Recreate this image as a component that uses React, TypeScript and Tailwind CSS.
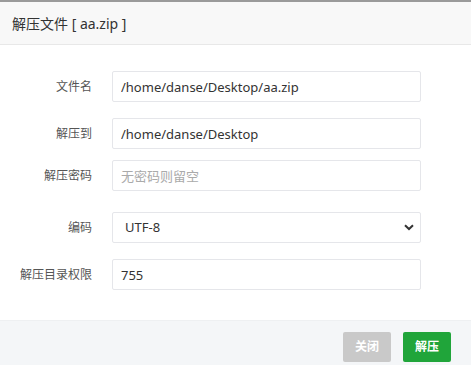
import React from 'react'

const font = { fontFamily: '"Noto Sans", "Noto Sans CJK SC", sans-serif' }

function Row({ label, children, className }: { label: string; children: React.ReactNode; className?: string }) {
  return (
    <div className={`flex items-center ${className ?? ''}`}>
      <label className="w-[92px] shrink-0 pr-0 text-right text-[12px] text-[#555]">{label}</label>
      <div className="ml-[20px] w-[309px]">{children}</div>
    </div>
  )
}

const inputCls =
  'h-[31px] w-full rounded-[2px] border border-[#e5e6ea] bg-white px-[8px] text-[13px] text-[#333] outline-none placeholder:text-[#aaa]'

export default function App() {
  return (
    <div className="h-[365px] w-[471px] overflow-hidden bg-white" style={font}>
      <div className="h-[2px] bg-[#9a9a9a]" />
      <div className="flex h-[43px] items-center border-b border-[#e8e8e8] bg-[#f8f8f8] pl-[12px] text-[14px] text-[#333]">
        解压文件 [ aa.zip ]
      </div>
      <div className="h-[275px] pt-[26px]">
        <Row label="文件名">
          <input className={inputCls} defaultValue="/home/danse/Desktop/aa.zip" />
        </Row>
        <Row label="解压到" className="mt-[16px]">
          <input className={inputCls} defaultValue="/home/danse/Desktop" />
        </Row>
        <Row label="解压密码" className="mt-[11px]">
          <input className={inputCls} placeholder="无密码则留空" />
        </Row>
        <Row label="编码" className="mt-[21px]">
          <div className="relative">
            <select className={`${inputCls} appearance-none pl-[12px]`} defaultValue="UTF-8">
              <option>UTF-8</option>
              <option>GBK</option>
            </select>
            <svg
              className="pointer-events-none absolute right-[7px] top-[12px]"
              width="10"
              height="7"
              viewBox="0 0 10 7"
            >
              <path d="M1 1.2 L5 5 L9 1.2" fill="none" stroke="#333" strokeWidth="2" />
            </svg>
          </div>
        </Row>
        <Row label="解压目录权限" className="mt-[16px]">
          <input className={inputCls} defaultValue="755" />
        </Row>
      </div>
      <div className="flex h-[45px] items-start justify-end gap-[12px] border-t border-[#eef0f2] bg-[#f4f6f8] pr-[20px] pt-[11px]">
        <button className="h-[30px] w-[48px] rounded-[2px] bg-[#c9c9c9] text-[12px] font-bold text-white">关闭</button>
        <button className="h-[30px] w-[48px] rounded-[2px] bg-[#20a53a] text-[12px] font-bold text-white">解压</button>
      </div>
    </div>
  )
}
